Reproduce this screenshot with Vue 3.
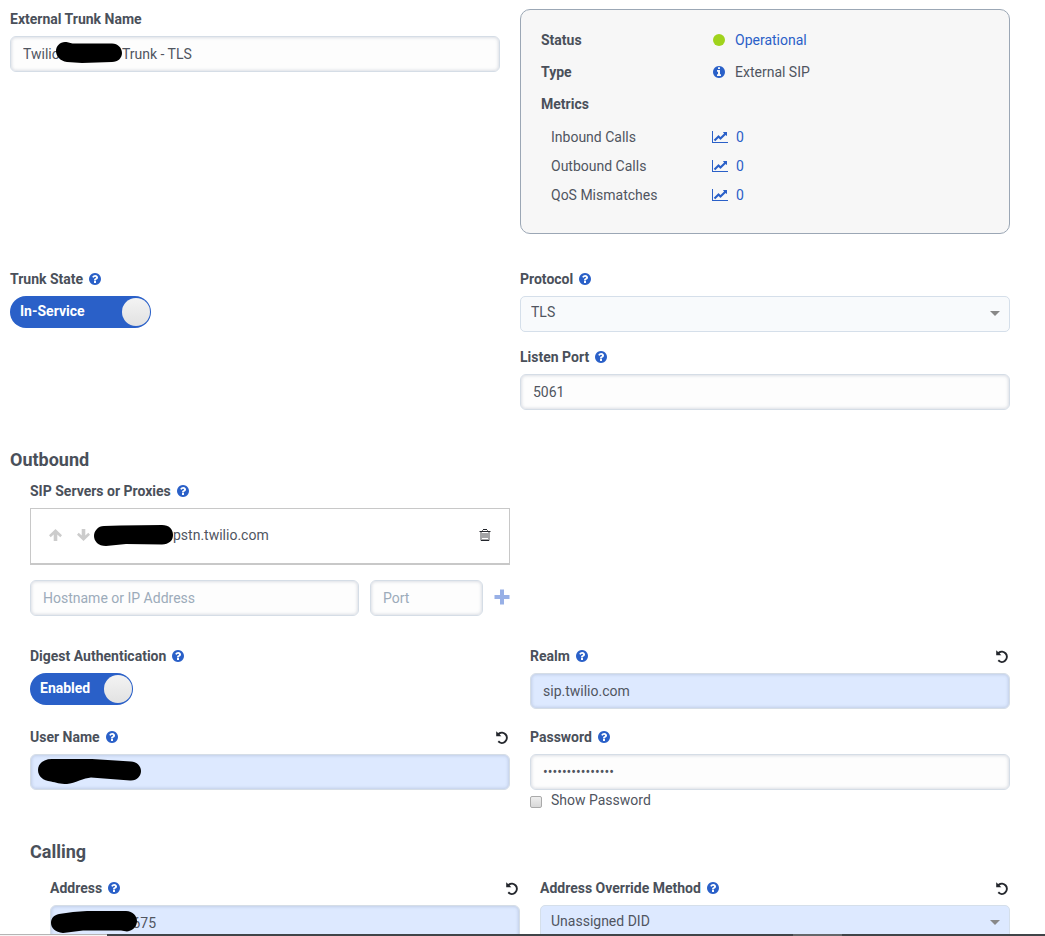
<script setup>
import { h, ref } from 'vue'

const circle = 'M1664 896q0 209-103 385.5t-279.5 279.5-385.5 103-385.5-103-279.5-279.5-103-385.5 103-385.5 279.5-279.5 385.5-103 385.5 103 279.5 279.5 103 385.5z'
const icons = {
  help: {
    box: '128 128 1536 1536',
    d: 'M1024 1376v-192q0-14-9-23t-23-9h-192q-14 0-23 9t-9 23v192q0 14 9 23t23 9h192q14 0 23-9t9-23zM1280 704q0-88-55.5-163t-138.5-116-170-41q-243 0-371 213-15 24 8 42l132 100q7 6 19 6 16 0 25-12 53-68 86-92 34-24 86-24 48 0 85.5 26t37.5 59q0 38-20 61t-68 45q-63 28-115.5 86.5t-52.5 125.5v36q0 14 9 23t23 9h192q14 0 23-9t9-23q0-19 21.5-49.5t54.5-49.5q32-18 49-28.5t46-35 44.5-48 28-60.5 12.5-81z' + circle
  },
  info: {
    box: '128 128 1536 1536',
    d: 'M1152 1376v-160q0-14-9-23t-23-9h-96v-512q0-14-9-23t-23-9h-320q-14 0-23 9t-9 23v160q0 14 9 23t23 9h96v320h-96q-14 0-23 9t-9 23v160q0 14 9 23t23 9h448q14 0 23-9t9-23zM1024 480v-160q0-14-9-23t-23-9h-192q-14 0-23 9t-9 23v160q0 14 9 23t23 9h192q14 0 23-9t9-23z' + circle
  },
  chart: {
    box: '0 128 2048 1536',
    d: 'M2048 1536v128h-2048v-1536h128v1408h1920zm-128-1248v435q0 21-19.5 29.5t-35.5-7.5l-121-121-633 633q-10 10-23 10t-23-10l-233-233-416 416-192-192 585-585q10-10 23-10t23 10l233 233 464-464-121-121q-16-16-7.5-35.5t29.5-19.5h435q14 0 23 9t9 23z'
  },
  up: { box: '0 0 13 12', d: 'M6.5 0 13 6.300 11.300 8.200 8.300 5.600V12H4.700V5.600L1.700 8.200 0 6.300z' },
  down: { box: '0 0 13 12', d: 'M6.500 12 13 5.700 11.300 3.800 8.300 6.400V0H4.700V6.400L1.700 3.800 0 5.700z' },
  undo: { box: '0 0 12 13', d: 'M.2.2V5.200H5.400L3.600 3.500A3.900 4.100 0 1 1 3 9.600L1.600 11.100A6 6.100 0 1 0 2.100 2z' },
  plus: { box: '0 0 16 16', d: 'M6 .5h4V6h5.5v4H10v5.5H6V10H.5V6H6z' }
}

const Icon = (props) =>
  h('svg', { class: ['icon', 'icon-' + props.name], viewBox: icons[props.name].box, 'aria-hidden': 'true' }, [
    h('path', { d: icons[props.name].d, fill: 'currentColor', 'fill-rule': 'evenodd' })
  ])
Icon.props = ['name']

const metrics = ['Inbound Calls', 'Outbound Calls', 'QoS Mismatches']

const trunkName = ref('Twilio' + ' '.repeat(18) + 'Trunk - TLS')
const inService = ref(true)
const protocol = ref('TLS')
const listenPort = ref('5061')
const digest = ref(true)
const realm = ref('sip.twilio.com')
const userName = ref('')
const password = ref('x'.repeat(15))
const showPassword = ref(false)
const address = ref(' '.repeat(20) + '675')
const override = ref('Unassigned DID')
</script>

<template>
  <main class="page">
    <div class="columns top">
      <div class="field">
        <div class="caption"><label for="trunk-name">External Trunk Name</label></div>
        <div class="control">
          <input id="trunk-name" v-model="trunkName" class="box" type="text" />
          <svg class="mask mask-name" viewBox="0 0 66 21" aria-hidden="true">
            <path d="M9 0C13 0 14 1.500 18 1.500H56C62 1.500 66 6 66 11S62 20 56 20L26 21 11 20C4 19 0 14 0 9S4 0 9 0z" />
          </svg>
        </div>
      </div>

      <dl class="summary">
        <div class="row">
          <dt>Status</dt>
          <dd><span class="slot"><i class="dot"></i></span><a href="#">Operational</a></dd>
        </div>
        <div class="row">
          <dt>Type</dt>
          <dd><span class="slot blue"><Icon name="info" /></span>External SIP</dd>
        </div>
        <div class="row"><dt>Metrics</dt></div>
        <div class="metrics">
          <div v-for="name in metrics" :key="name" class="row metric">
            <dt>{{ name }}</dt>
            <dd><span class="slot blue"><Icon name="chart" /></span><a href="#">0</a></dd>
          </div>
        </div>
      </dl>
    </div>

    <div class="columns state">
      <div class="field">
        <div class="caption">
          <span id="state-label">Trunk State</span>
          <button class="help" type="button" aria-label="Help"><Icon name="help" /></button>
        </div>
        <button class="toggle wide" type="button" role="switch" :aria-checked="inService" aria-labelledby="state-label" @click="inService = !inService">
          <span>In-Service</span><i class="knob"></i>
        </button>
      </div>
      <div class="stack">
        <div class="field">
          <div class="caption">
            <label for="protocol">Protocol</label>
            <button class="help" type="button" aria-label="Help"><Icon name="help" /></button>
          </div>
          <div class="control">
            <select id="protocol" v-model="protocol" class="box pick"><option>TLS</option></select>
            <i class="caret"></i>
          </div>
        </div>
        <div class="field">
          <div class="caption">
            <label for="listen-port">Listen Port</label>
            <button class="help" type="button" aria-label="Help"><Icon name="help" /></button>
          </div>
          <input id="listen-port" v-model="listenPort" class="box" type="text" />
        </div>
      </div>
    </div>

    <section class="outbound">
      <h2>Outbound</h2>
      <div class="inset">
        <div class="columns">
          <div class="field">
            <div class="caption">
              <label for="host">SIP Servers or Proxies</label>
              <button class="help" type="button" aria-label="Help"><Icon name="help" /></button>
            </div>
            <ul class="servers">
              <li>
                <button class="move" type="button" aria-label="Move up"><Icon name="up" /></button>
                <button class="move" type="button" aria-label="Move down"><Icon name="down" /></button>
                <span class="host">
                  <svg class="mask-host" viewBox="0 0 79 21" aria-hidden="true">
                    <path d="M10 1 26 .500 68 0C75 0 79 4 79 10S75 19 68 19.500L32 19 12 21C4 21 0 16 0 11S4 1 10 1z" />
                  </svg>pstn.twilio.com
                </span>
                <button class="trash" type="button" aria-label="Delete">
                  <svg viewBox="0 0 12 12" aria-hidden="true">
                    <path d="M1 3h10v8.500H1z" fill="#a3a4a6" />
                    <path d="M3 3.500h6M3 9.500h6" stroke="#fff" />
                    <path d="M.500 2.500h11M2 11.500h8M4 .500h4" stroke="#24272d" />
                    <path d="M3.500 1v1M8.500 1v1" stroke="#777" />
                  </svg>
                </button>
              </li>
            </ul>
            <div class="adder">
              <input id="host" class="box" type="text" placeholder="Hostname or IP Address" />
              <input class="box" type="text" placeholder="Port" aria-label="Port" />
              <button class="add" type="button" aria-label="Add"><Icon name="plus" /></button>
            </div>
          </div>
        </div>

        <div class="columns auth">
          <div class="field">
            <div class="caption">
              <span id="digest-label">Digest Authentication</span>
              <button class="help" type="button" aria-label="Help"><Icon name="help" /></button>
            </div>
            <button class="toggle" type="button" role="switch" :aria-checked="digest" aria-labelledby="digest-label" @click="digest = !digest">
              <span>Enabled</span><i class="knob"></i>
            </button>
          </div>
          <div class="field">
            <div class="caption">
              <label for="realm">Realm</label>
              <button class="help" type="button" aria-label="Help"><Icon name="help" /></button>
              <button class="undo" type="button" aria-label="Reset"><Icon name="undo" /></button>
            </div>
            <input id="realm" v-model="realm" class="box changed" type="text" />
          </div>
          <div class="field">
            <div class="caption">
              <label for="user">User Name</label>
              <button class="help" type="button" aria-label="Help"><Icon name="help" /></button>
              <button class="undo" type="button" aria-label="Reset"><Icon name="undo" /></button>
            </div>
            <div class="control">
              <input id="user" v-model="userName" class="box changed" type="text" />
              <svg class="mask mask-user" viewBox="0 0 103 25" aria-hidden="true">
                <path d="M14 0H54L93 2.500C99 3 103 7 103 12S99 22 92 21.500L53 18.500C46 19 37 24 29 25 22 25 18 23.500 13 22.500 5 22 0 17 0 11S5 0 14 0z" />
              </svg>
            </div>
          </div>
          <div class="field">
            <div class="caption">
              <label for="password">Password</label>
              <button class="help" type="button" aria-label="Help"><Icon name="help" /></button>
            </div>
            <input id="password" v-model="password" class="box" :type="showPassword ? 'text' : 'password'" />
            <label class="show"><input v-model="showPassword" type="checkbox" />Show Password</label>
          </div>
        </div>

        <section class="calling">
          <h2>Calling</h2>
          <div class="inset columns">
            <div class="field">
              <div class="caption">
                <label for="address">Address</label>
                <button class="help" type="button" aria-label="Help"><Icon name="help" /></button>
                <button class="undo" type="button" aria-label="Reset"><Icon name="undo" /></button>
              </div>
              <div class="control">
                <input id="address" v-model="address" class="box changed" type="text" />
                <svg class="mask mask-address" viewBox="0 0 86 22" aria-hidden="true">
                  <path d="M8 3 22 1 36 0H75C82 .500 86 5 86 10S82 20 76 20.500L70 19.500H32L12 22C4 21 0 17 0 12S3 4 8 3z" />
                </svg>
              </div>
            </div>
            <div class="field">
              <div class="caption">
                <label for="override">Address Override Method</label>
                <button class="help" type="button" aria-label="Help"><Icon name="help" /></button>
                <button class="undo" type="button" aria-label="Reset"><Icon name="undo" /></button>
              </div>
              <div class="control">
                <select id="override" v-model="override" class="box pick changed"><option>Unassigned DID</option></select>
                <i class="caret"></i>
              </div>
            </div>
          </div>
        </section>
      </div>
    </section>

    <div class="strip"><i class="light"></i><i></i><i class="mid"></i><i></i></div>
  </main>
</template>

<style>
body {
  background: #fff;
}
</style>

<style scoped>
.page {
  box-sizing: border-box;
  height: 100vh;
  overflow: hidden;
  padding: 9px 35px 0 10px;
  font: 14px/20px Roboto, 'Liberation Sans', sans-serif;
  color: #50555f;
}
.page :deep(*) {
  box-sizing: border-box;
}
button {
  display: flex;
  align-items: center;
  padding: 0;
  border: 0;
  background: none;
  font: inherit;
  color: inherit;
  cursor: pointer;
}
a {
  color: #2a60c8;
  text-decoration: none;
}
.columns {
  display: grid;
  grid-template-columns: 1fr 1fr;
  column-gap: 20px;
  align-items: start;
}
.field {
  min-width: 0;
}
.state {
  margin-top: 35px;
}
.stack {
  display: grid;
  gap: 15px;
}
.caption {
  display: flex;
  align-items: center;
  height: 20px;
  margin-bottom: 7px;
  font-weight: 700;
  color: #4a505a;
}
.help {
  margin-left: 6px;
  color: #2a60c8;
}
.undo {
  margin-left: auto;
  margin-right: 2px;
  color: #24272d;
}
.icon {
  display: block;
  width: 12px;
  height: 12px;
}
.icon-undo {
  height: 13px;
}
.icon-up,
.icon-down {
  width: 13px;
}
.icon-chart {
  width: 16px;
}
.icon-plus {
  width: 16px;
  height: 16px;
}
.control {
  position: relative;
}
.box {
  display: block;
  width: 100%;
  min-width: 0;
  height: 36px;
  margin: 0;
  padding: 0 12px;
  border: 1px solid #d5dde6;
  border-radius: 6px;
  background: #fdfdfd;
  box-shadow: inset 0 0 3px 1px rgba(70, 90, 120, 0.18);
  font: inherit;
  color: #50555f;
  outline: 0;
}
.box::placeholder {
  color: #9cabba;
  opacity: 1;
}
.pick {
  appearance: none;
  padding: 0 30px 4px 10px;
  border: 1px solid #d5dfea;
  border-radius: 5px;
  background: #f8fafc;
  box-shadow: none;
}
.changed {
  background: #dde9ff;
}
.caret {
  position: absolute;
  right: 10px;
  top: 15px;
  border: 5px solid transparent;
  border-top-color: #888;
  border-bottom: 0;
  pointer-events: none;
}
.mask {
  position: absolute;
  pointer-events: none;
}
.mask-name {
  left: 46px;
  top: 6px;
  width: 66px;
}
.mask-user {
  left: 8px;
  top: 5px;
  width: 103px;
}
.mask-address {
  left: 1px;
  top: 6px;
  width: 86px;
}
.summary {
  margin: 0;
  padding: 14px 20px 24px;
  border: 1px solid #9ba7b5;
  border-radius: 10px;
  background: #f7f7f7;
}
.row {
  display: grid;
  grid-template-columns: 170px 1fr;
  align-items: center;
  height: 32px;
}
.row dt {
  font-weight: 700;
  color: #4a505a;
}
.row dd {
  display: flex;
  align-items: center;
  margin: 0;
}
.metrics {
  padding: 2px 0 0 10px;
}
.metric {
  grid-template-columns: 161px 1fr;
  height: 29px;
}
.metric dt {
  font-weight: 400;
  color: #50555f;
}
.slot {
  display: flex;
  justify-content: center;
  width: 16px;
  margin-right: 8px;
}
.blue {
  color: #2a60c8;
}
.dot {
  width: 12px;
  height: 12px;
  border-radius: 50%;
  background: #a0d31c;
}
.toggle {
  justify-content: space-between;
  gap: 14px;
  height: 32px;
  padding: 0 1px 0 10px;
  border-radius: 16px;
  background: #2a60c8;
  color: #fff;
  font-weight: 700;
}
.toggle span {
  padding-bottom: 2px;
}
.wide {
  min-width: 141px;
}
.knob {
  width: 28px;
  height: 28px;
  border-radius: 50%;
  background: linear-gradient(#f3f3f3, #e2e2e2);
}
h2 {
  margin: 0;
  font-size: 18px;
  line-height: 24px;
  font-weight: 700;
  color: #4a505a;
}
.outbound {
  margin-top: 38px;
}
.inset {
  padding-left: 20px;
}
.outbound > .inset {
  padding-top: 9px;
}
.servers {
  margin: 0 0 15px;
  padding: 0;
  list-style: none;
  border: 1px solid #c8c8c8;
  border-bottom-width: 2px;
}
.servers li {
  display: flex;
  align-items: center;
  height: 54px;
  padding: 0 18px 2px;
}
.move {
  margin-right: 15px;
  color: #ccc;
}
.host {
  display: flex;
  align-items: center;
  margin-left: -11px;
}
.mask-host {
  width: 79px;
}
.trash {
  margin-left: auto;
}
.trash svg {
  display: block;
  width: 12px;
  height: 12px;
  fill: none;
}
.adder {
  display: grid;
  grid-template-columns: 1fr 113px 16px;
  gap: 11px;
  align-items: center;
}
.add {
  padding-bottom: 2px;
  color: #98b0e6;
}
.auth {
  margin-top: 30px;
  row-gap: 18px;
}
.show {
  display: flex;
  align-items: center;
  height: 20px;
}
.show input {
  appearance: none;
  width: 12px;
  height: 12px;
  margin: 3px 9px 0 0;
  border: 1px solid #aaa;
  border-radius: 2px;
  background: linear-gradient(#eee, #d8d8d8);
}
.calling {
  margin-top: 30px;
}
.calling .inset {
  padding-top: 14px;
}
.strip {
  position: fixed;
  left: 0;
  right: 0;
  bottom: 0;
  display: grid;
  grid-template-columns: 107px 686fr 49px 203fr;
  height: 2px;
  background: #404448;
}
.strip .light {
  background: linear-gradient(#b5b5b5 50%, #f5f5f5 50%);
}
.strip .mid {
  background: #64676a;
}
</style>
